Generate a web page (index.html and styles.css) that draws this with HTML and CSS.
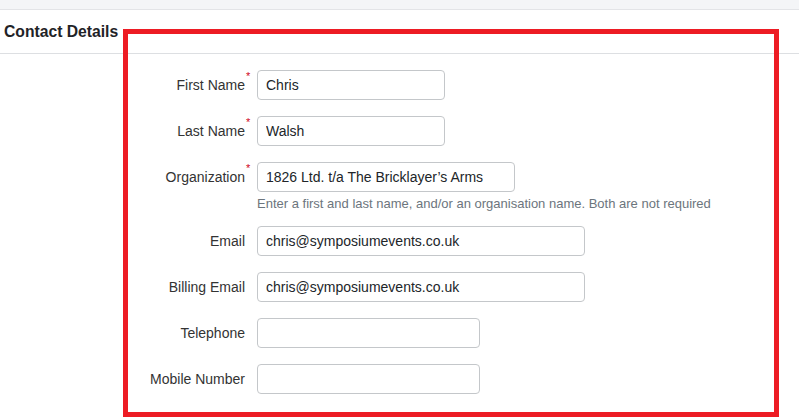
FILE: index.html
```html
<!DOCTYPE html>
<html>
<head>
<meta charset="utf-8">
<link rel="stylesheet" href="styles.css">
</head>
<body>
<div class="topbar"></div>
<div class="section-head">Contact Details</div>
<form class="form">
  <div class="row">
    <label class="label"><span class="req">First Name<span class="star">*</span></span></label>
    <input class="input w-sm" type="text" value="Chris">
  </div>
  <div class="row">
    <label class="label"><span class="req">Last Name<span class="star">*</span></span></label>
    <input class="input w-sm" type="text" value="Walsh">
  </div>
  <div class="row row-help">
    <label class="label"><span class="req">Organization<span class="star">*</span></span></label>
    <div class="field">
      <input class="input w-md" type="text" value="1826 Ltd. t/a The Bricklayer’s Arms">
      <div class="help">Enter a first and last name, and/or an organisation name. Both are not required</div>
    </div>
  </div>
  <div class="row">
    <label class="label">Email</label>
    <input class="input w-lg" type="text" value="chris@symposiumevents.co.uk">
  </div>
  <div class="row">
    <label class="label">Billing Email</label>
    <input class="input w-lg" type="text" value="chris@symposiumevents.co.uk">
  </div>
  <div class="row">
    <label class="label">Telephone</label>
    <input class="input w-ph" type="text" value="">
  </div>
  <div class="row">
    <label class="label">Mobile Number</label>
    <input class="input w-ph" type="text" value="">
  </div>
</form>
<div class="highlight"></div>
</body>
</html>
```
FILE: styles.css
```css
html, body {
  margin: 0;
  padding: 0;
  background: #ffffff;
  font-family: "Liberation Sans", Arial, sans-serif;
  color: #212529;
  overflow: hidden;
}
.topbar {
  height: 9px;
  background: #f4f5f7;
  border-bottom: 1px solid #e3e4e7;
}
.section-head {
  display: flex;
  align-items: center;
  padding-left: 4px;
  font-size: 15.7px;
  font-weight: bold;
  color: #1f2327;
  border-bottom: 1px solid #dddfe2;
  box-sizing: border-box;
  height: 44px;
}
.form {
  padding-top: 16px;
  margin: 0;
}
.row {
  display: flex;
  align-items: flex-start;
  margin-bottom: 16px;
}
.row-help {
  margin-bottom: 13px;
}
.label {
  width: 245px;
  flex: none;
  height: 30px;
  display: flex;
  align-items: center;
  justify-content: flex-end;
  font-size: 14px;
  color: #333333;
  margin-right: 12px;
}
.req {
  position: relative;
}
.star {
  position: absolute;
  left: 100%;
  top: -7px;
  margin-left: 1px;
  font-size: 11px;
  color: #d0021b;
}
.field {
  display: flex;
  flex-direction: column;
}
.input {
  box-sizing: border-box;
  height: 30px;
  border: 1px solid #c4c7ca;
  border-radius: 4px;
  padding: 0 8px;
  font-family: "Liberation Sans", Arial, sans-serif;
  font-size: 14px;
  color: #212529;
  background: #fff;
  margin: 0;
  outline: none;
}
.w-sm { width: 188px; }
.w-md { width: 258px; }
.w-lg { width: 328px; }
.w-ph { width: 223px; }
.help {
  margin-top: 3px;
  line-height: 18px;
  font-size: 13px;
  color: #6c757d;
  white-space: nowrap;
}
.highlight {
  position: absolute;
  left: 123px;
  top: 29px;
  width: 656px;
  height: 388px;
  box-sizing: border-box;
  border: 5px solid #ed1c24;
  pointer-events: none;
}
```
